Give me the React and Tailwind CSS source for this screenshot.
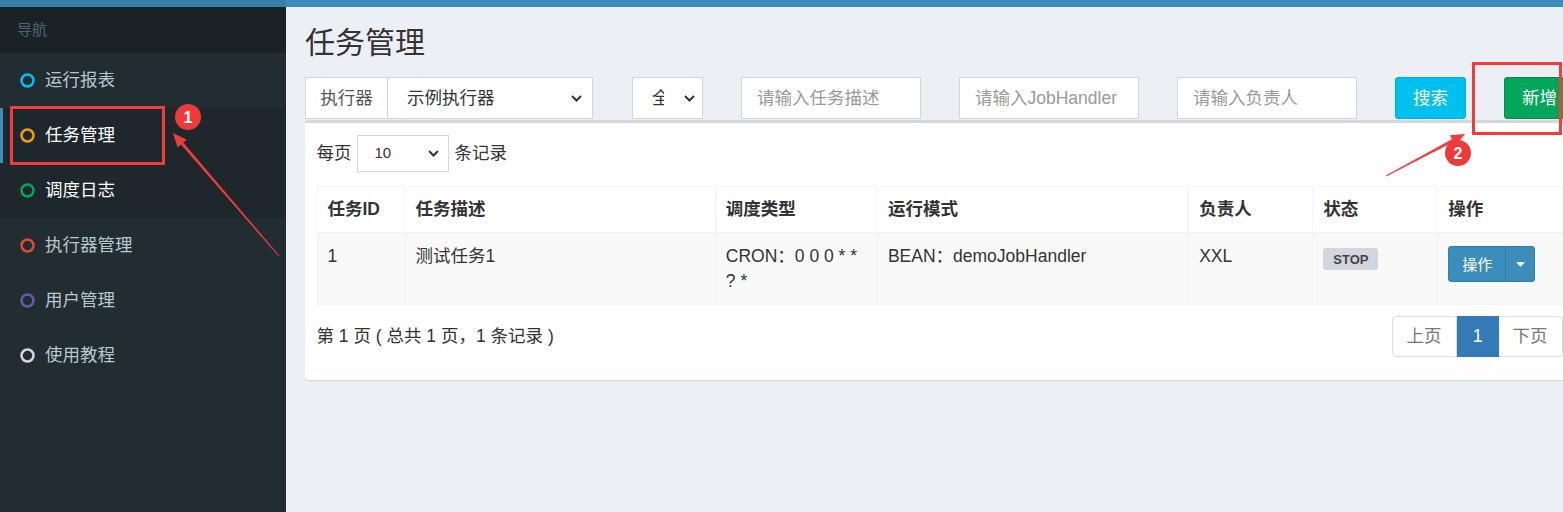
/**
 * Task management page (admin console)
 * Sidebar navigation, filter bar and the job list table
 */

import React from 'react';

const menu = [
  { label: '运行报表', color: '#00c0ef' },
  { label: '任务管理', color: '#f39c12', active: true },
  { label: '调度日志', color: '#00a65a', hover: true },
  { label: '执行器管理', color: '#dd4b39' },
  { label: '用户管理', color: '#605ca8' },
  { label: '使用教程', color: '#d2d6de' },
];

const columns = [
  { title: '任务ID', width: 88 },
  { title: '任务描述', width: 310 },
  { title: '调度类型', width: 162 },
  { title: '运行模式', width: 311 },
  { title: '负责人', width: 124 },
  { title: '状态', width: 125 },
  { title: '操作', width: 124 },
];

/**
 * Hollow circle icon used in the sidebar menu
 */
const CircleIcon = ({ color }) => (
  <svg width="15" height="15" viewBox="0 0 15 15" className="shrink-0">
    <circle cx="7.5" cy="7.5" r="6" fill="none" stroke={color} strokeWidth="2.5" />
  </svg>
);

/**
 * Chevron drawn at the right of the select boxes
 */
const Chevron = () => (
  <svg width="11" height="7" viewBox="0 0 11 7" className="shrink-0">
    <polyline points="1,1 5.5,5.5 10,1" fill="none" stroke="#333" strokeWidth="2" />
  </svg>
);

const Sidebar = () => (
  <aside className="w-[286px] shrink-0 bg-[#222d32] flex flex-col">
    <div className="h-[7px] bg-[#367fa9]" />
    {/* Header */}
    <div className="h-[46px] bg-[#1a2226] flex items-center pl-[17px] text-[15px] text-[#4b646f]">
      导航
    </div>

    {/* Menu items */}
    <ul>
      {menu.map((item) => (
        <li
          key={item.label}
          className={`h-[55px] flex items-center gap-[10px] pl-[17px] border-l-[3px] text-[17.5px] ${
            item.active
              ? 'bg-[#1e282c] border-[#3c8dbc] text-white'
              : item.hover
              ? 'bg-[#1e282c] border-transparent text-white'
              : 'border-transparent text-[#b8c7ce]'
          }`}
        >
          <CircleIcon color={item.color} />
          <span>{item.label}</span>
        </li>
      ))}
    </ul>
  </aside>
);

const FilterBar = () => (
  <div className="mt-[18px] flex h-[42px]">
    {/* Executor group */}
    <div className="w-[327px] shrink-0 pl-[19px] pr-[20px]">
      <div className="flex h-[42px] bg-white border border-[#d2d6de] text-[17.5px] text-[#555]">
        <div className="w-[82px] flex items-center justify-center border-r border-[#d2d6de]">执行器</div>
        <div className="flex-1 flex items-center justify-between pl-[19px] pr-[10px] text-[#333]">
          <span>示例执行器</span>
          <Chevron />
        </div>
      </div>
    </div>

    {/* Status select */}
    <div className="w-[109px] shrink-0 px-[19px]">
      <div className="h-[42px] bg-white border border-[#d2d6de] flex items-center pl-[19px] pr-[7px] text-[17.5px] text-[#333]">
        <div className="w-[12px] overflow-hidden whitespace-nowrap">全</div>
        <div className="flex-1" />
        <Chevron />
      </div>
    </div>

    {['请输入任务描述', '请输入JobHandler', '请输入负责人'].map((ph) => (
      <div key={ph} className="w-[218px] shrink-0 px-[19px]">
        <div className="h-[42px] bg-white border border-[#d2d6de] flex items-center pl-[15px] text-[17.5px] text-[#999]">
          {ph}
        </div>
      </div>
    ))}

    <div className="w-[109px] shrink-0 px-[19px]">
      <button className="w-full h-[42px] rounded-[3px] bg-[#00c0ef] border border-[#00acd6] text-white text-[17.5px]">
        搜索
      </button>
    </div>
    <div className="w-[109px] shrink-0 px-[19px]">
      <button className="w-full h-[42px] rounded-[3px] bg-[#00a65a] border border-[#008d4c] text-white text-[17.5px]">
        新增
      </button>
    </div>
  </div>
);

const JobTable = () => (
  <table className="mt-[14px] w-full table-fixed border-collapse text-[17.5px] text-[#333]">
    <colgroup>
      {columns.map((c) => (
        <col key={c.title} style={{ width: c.width }} />
      ))}
    </colgroup>
    <thead>
      <tr>
        {columns.map((c) => (
          <th
            key={c.title}
            className="border border-[#f4f4f4] border-b-2 px-[10px] py-[10px] leading-[25px] text-left font-bold"
          >
            {c.title}
          </th>
        ))}
      </tr>
    </thead>
    <tbody>
      <tr className="bg-[#f9f9f9] align-top">
        <td className="border border-[#f4f4f4] px-[10px] py-[10px] leading-[25px]">1</td>
        <td className="border border-[#f4f4f4] px-[10px] py-[10px] leading-[25px]">测试任务1</td>
        <td className="border border-[#f4f4f4] px-[10px] py-[10px] leading-[25px]">
          CRON：0 0 0 * *
          <br />? *
        </td>
        <td className="border border-[#f4f4f4] px-[10px] py-[10px] leading-[25px]">BEAN：demoJobHandler</td>
        <td className="border border-[#f4f4f4] px-[10px] py-[10px] leading-[25px]">XXL</td>
        <td className="border border-[#f4f4f4] px-[10px] py-[10px] leading-[25px]">
          <span className="inline-flex h-[22px] items-center px-[10px] mt-[4px] align-top rounded-[3px] bg-[#d2d6de] text-[#444] text-[13px] font-bold">
            STOP
          </span>
        </td>
        <td className="border border-[#f4f4f4] px-[10px] py-[10px] leading-[25px]">
          {/* Split action button */}
          <div className="mt-[2px] flex h-[36px] w-[87px] rounded-[3px] overflow-hidden bg-[#3c8dbc] border border-[#367fa9] text-white">
            <div className="w-[57px] flex items-center justify-center text-[15px] border-r border-[#367fa9]">操作</div>
            <div className="flex-1 flex items-center justify-center">
              <svg width="9" height="5" viewBox="0 0 9 5">
                <polygon points="0,0 9,0 4.5,5" fill="#fff" />
              </svg>
            </div>
          </div>
        </td>
      </tr>
    </tbody>
  </table>
);

const Pagination = () => (
  <div className="mt-[11px] flex h-[41px] items-center justify-between text-[17.5px]">
    <div className="text-[#333]">第 1 页 ( 总共 1 页，1 条记录 )</div>
    <ul className="flex h-[41px]">
      <li className="w-[65px] flex items-center justify-center border border-[#ddd] rounded-l-[4px] bg-white text-[#777]">上页</li>
      <li className="w-[42px] flex items-center justify-center border border-[#337ab7] bg-[#337ab7] text-white">1</li>
      <li className="w-[64px] flex items-center justify-center border border-[#ddd] border-l-0 rounded-r-[4px] bg-white text-[#777]">下页</li>
    </ul>
  </div>
);

/**
 * Red screenshot annotations: boxes, numbered markers and arrows
 */
const Annotations = () => (
  <svg className="absolute inset-0 pointer-events-none" width="1563" height="512" viewBox="0 0 1563 512">
    <rect x="11.5" y="107.5" width="152" height="56" fill="none" stroke="#f23b3b" strokeWidth="3" />
    <rect x="1473.5" y="63.5" width="87" height="70" fill="none" stroke="#f23b3b" strokeWidth="3" />

    <polygon
      points="279.4,255.7 183.2,142.6 186.7,139.7 173,133 177.6,147.5 181,144.6 278.6,256.3"
      fill="#f23b3b"
    />
    <polygon
      points="1386.2,176.4 1453.3,141.9 1455.4,145.9 1465,134 1449.8,135.3 1451.9,139.3 1385.8,175.6"
      fill="#f23b3b"
    />

    <circle cx="188" cy="117" r="13" fill="#ee3a3a" />
    <text x="188" y="122.5" textAnchor="middle" fill="#fff" fontSize="16" fontWeight="bold" fontFamily="Liberation Sans, sans-serif">
      1
    </text>
    <circle cx="1458" cy="153" r="13" fill="#ee3a3a" />
    <text x="1458" y="158.5" textAnchor="middle" fill="#fff" fontSize="16" fontWeight="bold" fontFamily="Liberation Sans, sans-serif">
      2
    </text>
  </svg>
);

const App = () => {
  return (
    <div className="relative w-[1563px] h-[512px] overflow-hidden bg-[#ecf0f5] flex font-['Liberation_Sans','Noto_Sans_CJK_SC',sans-serif]">
      <Sidebar />

      <main className="w-[1308px] shrink-0">
        <div className="h-[7px] bg-[#3c8dbc]" />

        {/* Page title */}
        <h1 className="mt-[19px] pl-[19px] text-[30px] leading-[33px] text-[#333]">任务管理</h1>

        <FilterBar />

        {/* Job list box */}
        <div className="mt-[1px] ml-[18.5px] mr-[19.5px] bg-white border-t-[3px] border-[#d2d6de] rounded-[3px] shadow-[0_1px_1px_rgba(0,0,0,0.1)] px-[12px] pt-[12px] pb-[23px]">
          <div className="flex items-center h-[37px] text-[17.5px] text-[#333]">
            <span>每页</span>
            <div className="ml-[5px] mr-[6px] w-[92px] h-[37px] border border-[#d2d6de] flex items-center justify-between pl-[17px] pr-[9px] text-[15px]">
              <span>10</span>
              <Chevron />
            </div>
            <span>条记录</span>
          </div>

          <JobTable />
          <Pagination />
        </div>
      </main>

      <Annotations />
    </div>
  );
};

export default App;
